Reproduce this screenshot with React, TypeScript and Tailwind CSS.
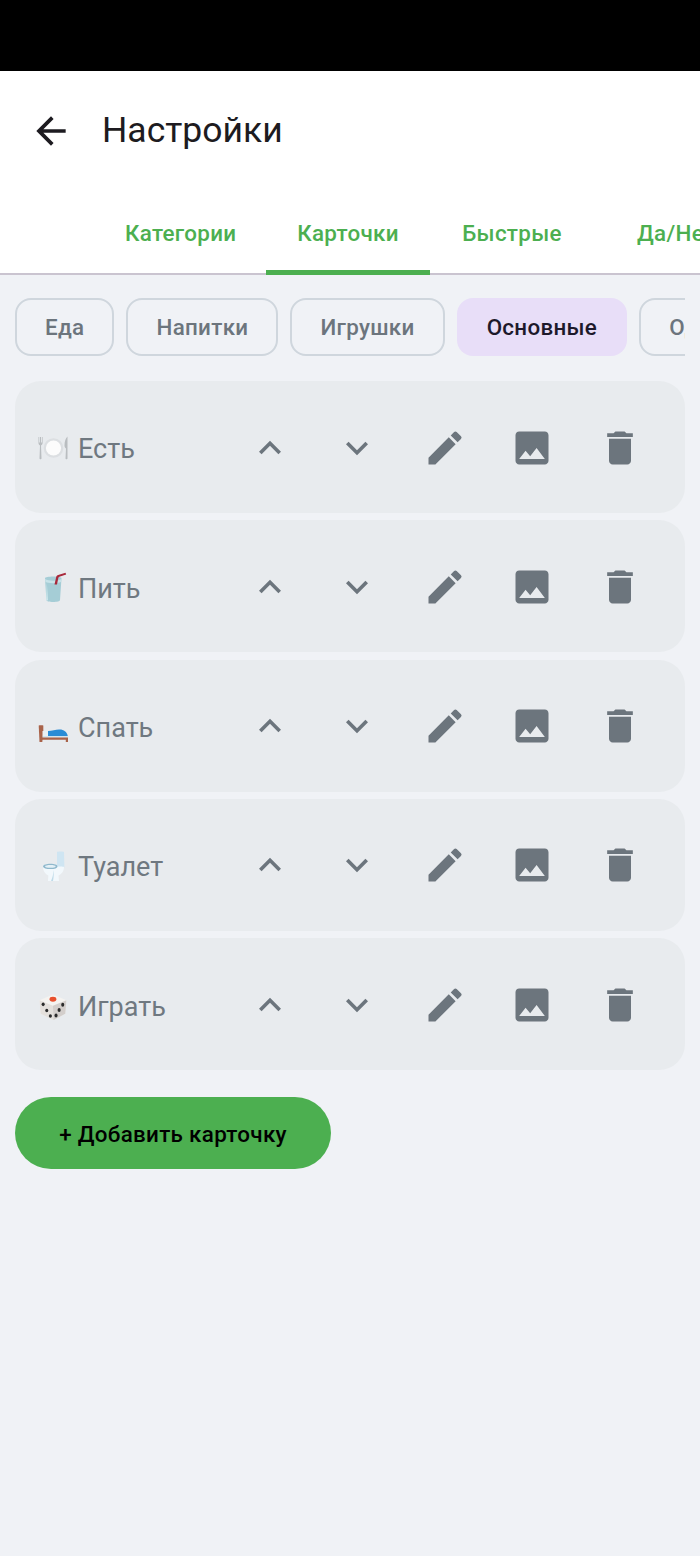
import { ReactNode } from "react";
import {
  MdArrowBack,
  MdDelete,
  MdEdit,
  MdImage,
  MdKeyboardArrowDown,
  MdKeyboardArrowUp,
} from "react-icons/md";

const PlateEmoji = () => (
  <svg width="30" height="30" viewBox="0 0 30 30">
    <path d="M.5 4v6c0 1.300.7 2 1.500 2.400L1.500 25.500c0 1 2 1 2 0L3 12.400C3.800 12 4.600 11.300 4.600 10V4h-.7v5.500H3V4h-1v5.500h-.8V4z" fill="#b9bdc0" />
    <circle cx="15.500" cy="15" r="9.800" fill="#dcdfe2" />
    <circle cx="15.500" cy="15" r="7.600" fill="#fcfcfc" />
    <path d="M29.500 3.500c-1.800 1.500-3 4.500-3 9 0 1.300.6 2.400 1.500 2.900l-.5 10.100c0 1 2 1 2 0z" fill="#b9bdc0" />
  </svg>
);

const CupEmoji = () => (
  <svg width="30" height="30" viewBox="0 0 30 30">
    <path d="M7 6c0-.8 3.800-1.600 8.200-1.600s8.300.8 8.300 1.600L22 28c0 1.300-3 2-6.800 2s-6.800-.7-6.800-2z" fill="#a5cdd6" />
    <path d="M7.200 7c1.500 1.100 4.400 1.700 8 1.700s6.600-.6 8.100-1.700l-.2 2.800c-1.500 1-4.400 1.400-7.900 1.400S8.900 10.800 7.400 9.800z" fill="#c8e3e9" />
    <path d="M8.800 11c.5 6 .7 12 1 17.500l-1.400-.6z" fill="#d8eef2" />
    <path d="M16.500 12.500 18.200 5c.2-1 1-1.700 2-2l7.300-2.200.7 1.700-6.800 2.300c-.7.200-1 .6-1.100 1.300l-1.300 6.400z" fill="#a8293b" />
  </svg>
);

const BedEmoji = () => (
  <svg width="30" height="30" viewBox="0 0 30 30">
    <path d="M.7 13.500c0-.5 4.600-.5 4.600 0V20l-1 10H1.500z" fill="#a9634a" />
    <path d="M4.500 19h7v5h-7z" fill="#e9f0f4" />
    <path d="M10 24v-5c4-.2 7.500-1 11-1.400 4-.4 8 2 8.800 6.400z" fill="#2a8cd6" />
    <path d="M4.500 24h25.300v1.800H4.500z" fill="#d3e3ec" />
    <path d="M4 25.500h26V30h-2.200v-2.300H4z" fill="#a9634a" />
  </svg>
);

const ToiletEmoji = () => (
  <svg width="30" height="30" viewBox="0 0 30 30">
    <path d="M19 1c0-.8 7-.8 7 0l.4 15.500H19z" fill="#cfe5f2" />
    <path d="M5 15.500c0-1.800 3.500-2.800 7.500-2.800s7 1 7 2.800c0 0 6 0 6.500.5 0 4.500-2.500 7-5.500 8.500l.5 5.500H10l.3-5.500C7 23 5 19.500 5 15.500z" fill="#f2f8fc" />
    <path d="M5 15.500c0-1.800 3.500-2.800 7.500-2.800s7 1 7 2.800c0 1.600-3 2.600-7 2.600S5 17.100 5 15.500z" fill="#8fb8cc" />
    <path d="M7 15.500c0-1 2.500-1.500 5.500-1.500s5.200.5 5.200 1.500-2.200 1.300-5.200 1.300S7 16.500 7 15.500z" fill="#e4f0f6" />
    <path d="M15.500 19c.5 3 .2 8-.5 11h-2c1.500-3 2.300-7 2.500-11z" fill="#bfdbe9" />
  </svg>
);

const DiceEmoji = () => (
  <svg width="30" height="30" viewBox="0 0 30 30">
    <g transform="translate(-0.500 3.200) scale(1.030 0.930)">
      <path d="M15 1.500 28 7.500 27 22 15.500 29 3 22 2 7.500z" fill="#f5f3f0" />
      <path d="M2 7.500 15 13.500l.5 15.500L3 22z" fill="#e4e0dc" />
      <path d="M28 7.500 15 13.500l.5 15.500L27 22z" fill="#d3cecb" />
      <ellipse cx="15" cy="6.500" rx="3.300" ry="2.600" fill="#e8502e" />
      <ellipse cx="5.500" cy="12" rx="1.500" ry="1.900" fill="#2b2b2b" />
      <ellipse cx="9" cy="18.500" rx="1.500" ry="1.900" fill="#2b2b2b" />
      <ellipse cx="12.500" cy="24.500" rx="1.500" ry="1.900" fill="#2b2b2b" />
      <ellipse cx="24.500" cy="12.500" rx="1.500" ry="2.100" fill="#2b2b2b" />
      <ellipse cx="21" cy="18" rx="1.500" ry="2.100" fill="#2b2b2b" />
      <ellipse cx="18" cy="24" rx="1.500" ry="2.100" fill="#2b2b2b" />
    </g>
  </svg>
);

const cards: { label: string; emoji: ReactNode }[] = [
  { label: "Есть", emoji: <PlateEmoji /> },
  { label: "Пить", emoji: <CupEmoji /> },
  { label: "Спать", emoji: <BedEmoji /> },
  { label: "Туалет", emoji: <ToiletEmoji /> },
  { label: "Играть", emoji: <DiceEmoji /> },
];

const chips = ["Еда", "Напитки", "Игрушки", "Основные", "Одежда"];

const CardRow = ({ label, emoji }: { label: string; emoji: ReactNode }) => {
  return (
    <div className="flex h-[132px] items-center rounded-[26px] bg-[#e8ebee] pl-[23px] pr-[21.5px]">
      <div className="flex flex-1 items-center gap-[10px] pt-[2px] text-[27px] text-[#6f7880]">
        {emoji}
        <span className="pt-[3px]">{label}</span>
      </div>
      <div className="flex pt-[1px] text-[#6c757d]">
        <div className="flex w-[87.5px] justify-center"><MdKeyboardArrowUp size={44} /></div>
        <div className="flex w-[87.5px] justify-center"><MdKeyboardArrowDown size={44} /></div>
        <div className="flex w-[87.5px] justify-center"><MdEdit size={44} /></div>
        <div className="flex w-[87.5px] justify-center"><MdImage size={44} /></div>
        <div className="flex w-[87.5px] justify-center"><MdDelete size={44} /></div>
      </div>
    </div>
  );
};

const App = () => {
  return (
    <div className="flex h-[1556px] w-[700px] flex-col overflow-hidden bg-[#f0f2f6] font-['Roboto',sans-serif]">
      <div className="h-[71px] bg-black" />
      <div className="bg-white">
        <div className="flex h-[119px] items-center pl-[29px]">
          <MdArrowBack size={44} className="text-[#1d1b20]" />
          <p className="ml-[29px] text-[35.5px] text-[#1d1b20]">Настройки</p>
        </div>
        <div className="flex h-[85px] overflow-hidden text-[22.4px] font-medium tracking-[0.3px] whitespace-nowrap text-[#4caf50]">
          <div className="flex w-[266px] shrink-0 items-center border-b-2 border-[#cac4d0] pl-[125px] pt-[5px]">Категории</div>
          <div className="flex w-[164px] shrink-0 items-center justify-center border-b-[5px] border-[#4caf50] pt-[8px]">Карточки</div>
          <div className="flex w-[164px] shrink-0 items-center justify-center border-b-2 border-[#cac4d0] pt-[5px]">Быстрые</div>
          <div className="flex flex-1 items-center border-b-2 border-[#cac4d0] pl-[43px] pt-[5px]">Да/Нет</div>
        </div>
      </div>
      <div className="mx-[15px] mt-[23px] flex gap-3 overflow-hidden text-[22.4px] font-medium tracking-[0.3px] whitespace-nowrap">
        {chips.map((chip) =>
          chip === "Основные" ? (
            <div key={chip} className="flex h-[58px] shrink-0 items-center rounded-[16px] bg-[#e8def8] px-[30px] pt-[1px] text-[#1d192b]">
              {chip}
            </div>
          ) : (
            <div key={chip} className="flex h-[58px] shrink-0 items-center rounded-[16px] border-2 border-[#cfd6dd] px-[28px] pt-[1px] text-[#6c757d]">
              {chip}
            </div>
          ),
        )}
      </div>
      <div className="mx-[15px] mt-[25px] flex flex-col gap-[7.33px]">
        {cards.map((card) => (
          <CardRow key={card.label} label={card.label} emoji={card.emoji} />
        ))}
      </div>
      <button className="mx-[15px] mt-[27px] h-[72px] w-[316px] rounded-full bg-[#4caf50] pt-[3px] text-[22.4px] font-medium tracking-[0.3px] text-black">
        + Добавить карточку
      </button>
    </div>
  );
};

export default App;
